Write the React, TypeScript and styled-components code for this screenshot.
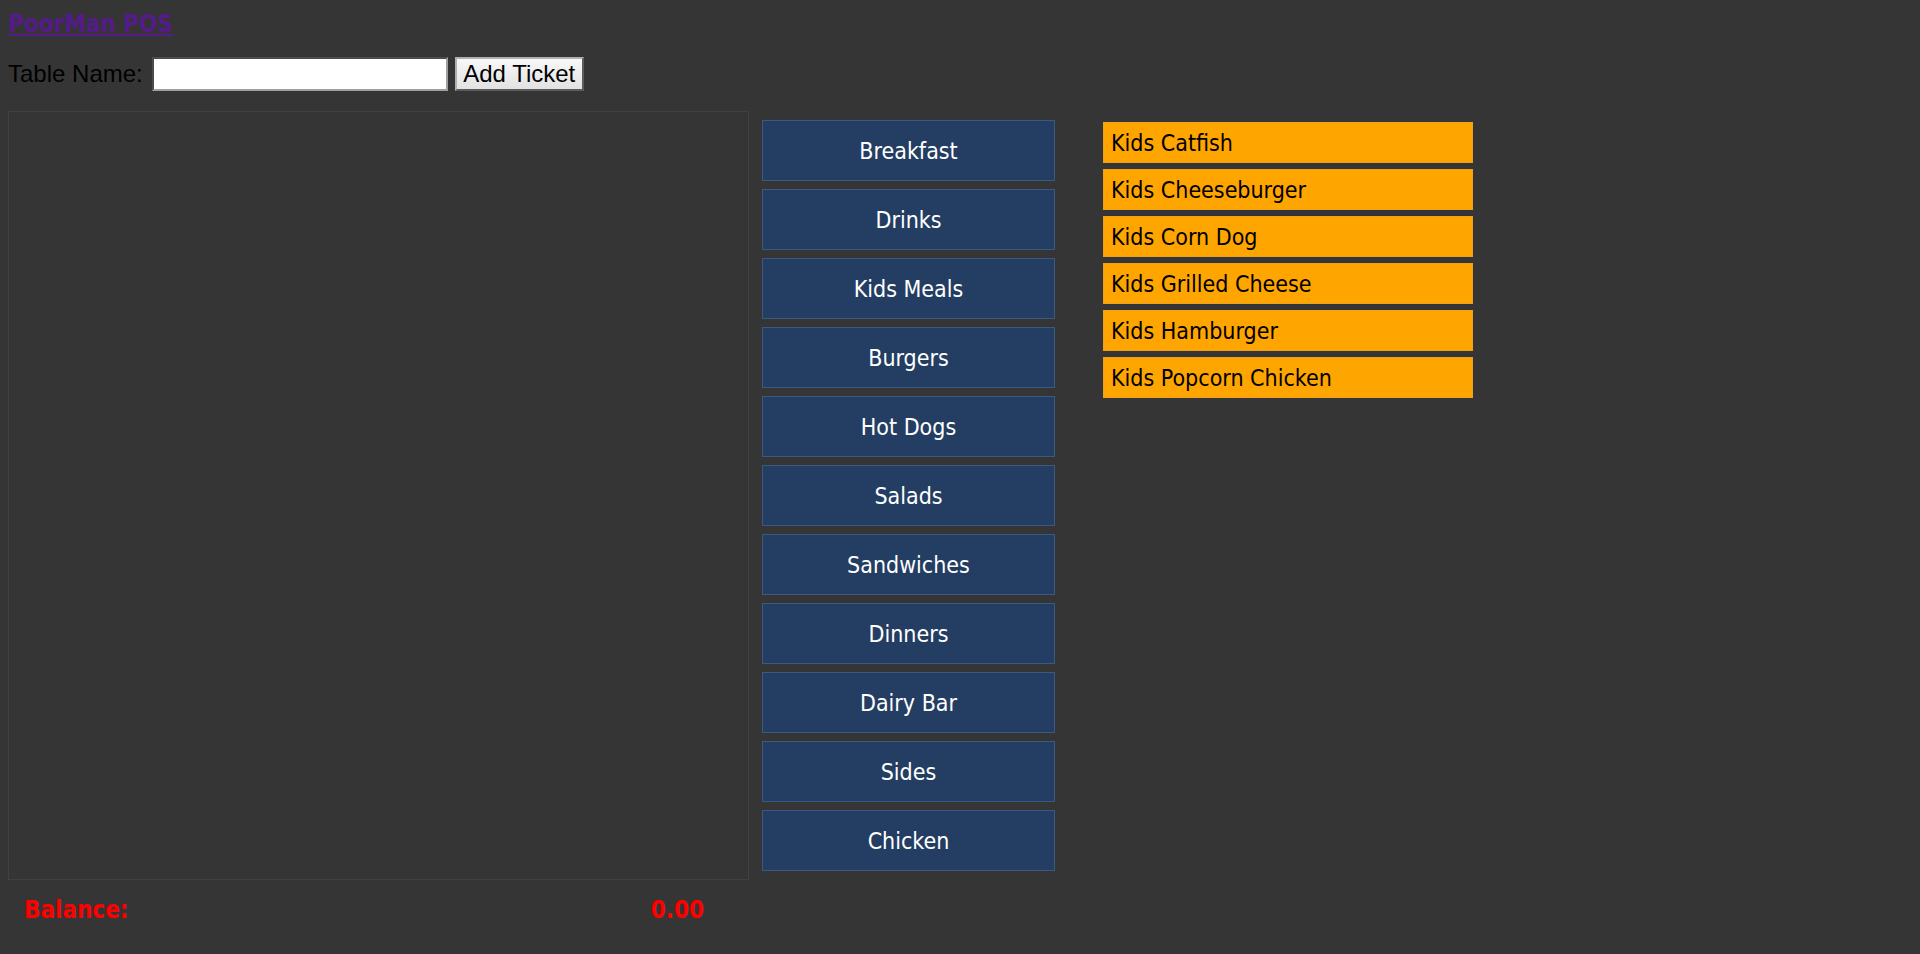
import * as React from "react";
import styled, { createGlobalStyle } from "styled-components";

const GlobalStyle = createGlobalStyle`
  html, body {
    margin: 0;
    background: #353535;
  }
  body {
    padding: 8px;
    font-family: "DejaVu Sans Condensed", "DejaVu Sans", sans-serif;
  }
`;

const Title = styled.a`
  display: inline-block;
  margin-top: 2px;
  font-size: 24px;
  font-weight: bold;
  line-height: 28px;
  color: #551a8b;
  text-decoration: underline;
`;

const TicketForm = styled.form`
  display: flex;
  align-items: center;
  height: 34px;
  margin-top: 19px;
  font-family: "Liberation Sans", Arial, sans-serif;
  font-size: 24px;
  color: #000;
`;

const NameInput = styled.input`
  width: 296px;
  height: 34px;
  box-sizing: border-box;
  margin-left: 9px;
  border: 2px inset #a0a0a0;
  background: #fff;
  font-size: 20px;
`;

const AddButton = styled.button`
  width: 129px;
  height: 34px;
  box-sizing: border-box;
  margin-left: 7px;
  padding: 0;
  font-family: "Liberation Sans", Arial, sans-serif;
  font-size: 24px;
  color: #000;
  background: linear-gradient(#f8f8f8, #e2e2e2);
  border: 2px outset #b0b0b0;
`;

const Main = styled.div`
  display: flex;
  align-items: flex-start;
  margin-top: 20px;
`;

const TicketColumn = styled.div`
  display: flex;
  flex-direction: column;
`;

const TicketPanel = styled.div`
  width: 741px;
  height: 769px;
  box-sizing: border-box;
  border: 1px solid #414141;
`;

const BalanceRow = styled.div`
  display: flex;
  justify-content: space-between;
  padding: 16px 45px 0 16px;
  color: #ff0000;
  font-weight: bold;
  font-size: 24px;
`;

const CategoryList = styled.div`
  display: flex;
  flex-direction: column;
  gap: 8px;
  margin-left: 13px;
  padding-top: 9px;
`;

const CategoryButton = styled.button`
  width: 293px;
  height: 61px;
  box-sizing: border-box;
  background: #233e62;
  border: 1px solid #3b5a80;
  color: #fff;
  font-family: "DejaVu Sans Condensed", "DejaVu Sans", sans-serif;
  font-size: 23px;
  cursor: pointer;
`;

const ItemList = styled.div`
  display: flex;
  flex-direction: column;
  gap: 6px;
  margin-left: 48px;
  padding-top: 11px;
`;

const MenuItem = styled.div`
  width: 370px;
  height: 41px;
  box-sizing: border-box;
  display: flex;
  align-items: center;
  padding-left: 7px;
  background: #ffa500;
  border: 1px solid #f0a020;
  color: #000;
  font-size: 23px;
`;

const categories = [
  "Breakfast",
  "Drinks",
  "Kids Meals",
  "Burgers",
  "Hot Dogs",
  "Salads",
  "Sandwiches",
  "Dinners",
  "Dairy Bar",
  "Sides",
  "Chicken",
];

const kidsItems = [
  "Kids Catfish",
  "Kids Cheeseburger",
  "Kids Corn Dog",
  "Kids Grilled Cheese",
  "Kids Hamburger",
  "Kids Popcorn Chicken",
];

const App: React.FunctionComponent = () => {
  return (
    <>
      <GlobalStyle />
      <Title href="#">PoorMan POS</Title>
      <TicketForm onSubmit={(e) => e.preventDefault()}>
        <label htmlFor="table-name">Table Name:</label>
        <NameInput id="table-name" type="text" />
        <AddButton type="submit">Add Ticket</AddButton>
      </TicketForm>
      <Main>
        <TicketColumn>
          <TicketPanel />
          <BalanceRow>
            <span>Balance:</span>
            <span>0.00</span>
          </BalanceRow>
        </TicketColumn>
        <CategoryList>
          {categories.map((c) => (
            <CategoryButton key={c}>{c}</CategoryButton>
          ))}
        </CategoryList>
        <ItemList>
          {kidsItems.map((i) => (
            <MenuItem key={i}>{i}</MenuItem>
          ))}
        </ItemList>
      </Main>
    </>
  );
};

export default App;
